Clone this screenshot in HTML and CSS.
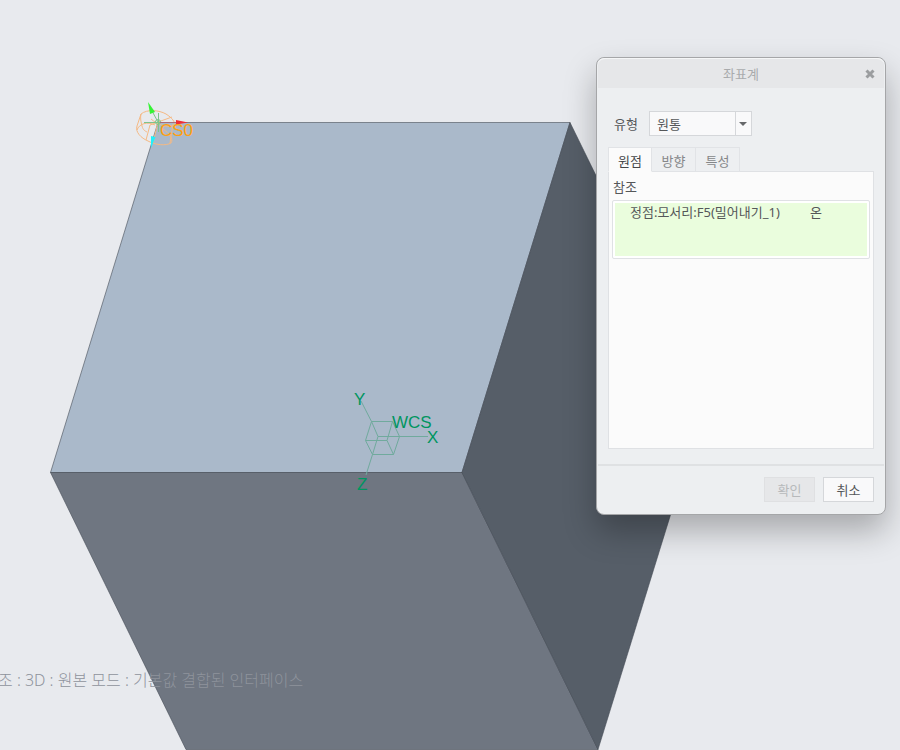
FILE: index.html
```html
<!DOCTYPE html>
<html lang="ko">
<head>
<meta charset="utf-8">
<title>좌표계</title>
<link rel="stylesheet" href="styles.css">
</head>
<body>
<main class="viewport">
  <svg class="scene" viewBox="0 0 900 750" preserveAspectRatio="xMinYMin slice">
    <g class="solid">
      <path class="face-top" d="M158 122.5H570L462 472.5H50.500Z"/>
      <path class="face-front" d="M50.500 472.500H462L598 749.500H186Z"/>
      <path class="face-side" d="M570 122.500L706 400L598 749.500L462 472.500Z"/>
    </g>
    <g class="wcs">
      <path d="M371.500 421.500H392.500L399.500 436.500L393.500 454.500H372.500L365.500 440.500ZM371.500 421.500L378 436.500L372.500 454.500M378 436.500H428M365.500 440.500H387L393.500 454.500M387 440.500L392.500 421.500M371.500 421.500L361 401M372.500 454.500L366 475"/>
      <text x="354" y="405">Y</text>
      <text x="392" y="428">WCS</text>
      <text x="427" y="443">X</text>
      <text x="357" y="490">Z</text>
    </g>
    <g class="csys">
      <path class="csys-body" d="M141 114C147 109 159 110 166 114C174 119 177 125 172 126C166 127 158 125 151 119M141 114L137 126C135 132 141 138 148 141C155 145 166 146 171 143C174 139 169 133 163 129M141 114C140 118 141 122 142 126M137 130C139 124 147 121 155 125M142 126C143 130 145 131 147 132M158 122L150 125L146 140M158 122L172 117M173 124L170 143M158 122L153 143"/>
      <path class="csys-origin" d="M158.500 113V132M144 122.500H168M158 122L152 111"/>
      <circle class="csys-origin" cx="158" cy="122" r="2.500"/>
      <path class="axis-line" d="M160 122.500H180"/>
      <path class="axis-x" d="M176 120L188 122.500L176 124.500Z"/>
      <path class="axis-y" d="M148 102L155 112L150 114Z"/>
      <path class="axis-z" d="M151 136L155.500 137L151 148Z"/>
      <text x="160" y="136">CS0</text>
    </g>
  </svg>
  <p class="status">조 : 3D : 원본 모드 : 기본값 결합된 인터페이스</p>

  <section class="dialog" role="dialog" aria-labelledby="dialog-title">
    <header class="titlebar">
      <h1 id="dialog-title">좌표계</h1>
      <button class="close" type="button" aria-label="닫기">
        <svg viewBox="0 0 12 12"><path d="M2.500 2.500L9.500 9.500M9.500 2.500L2.500 9.500"/></svg>
      </button>
    </header>
    <div class="body">
      <div class="type-row">
        <label for="type">유형</label>
        <div class="combo">
          <select id="type"><option>원통</option></select>
          <span class="arrow"></span>
        </div>
      </div>
      <div class="tabs" role="tablist">
        <button class="tab active" type="button" role="tab" aria-selected="true">원점</button>
        <button class="tab" type="button" role="tab" aria-selected="false">방향</button>
        <button class="tab" type="button" role="tab" aria-selected="false">특성</button>
      </div>
      <div class="panel" role="tabpanel">
        <h2 id="refs">참조</h2>
        <div class="collector">
          <table aria-labelledby="refs">
            <tbody><tr><td class="ref-name">정점:모서리:F5(밀어내기_1)</td><td>온</td></tr></tbody>
          </table>
        </div>
      </div>
    </div>
    <footer class="actions">
      <button type="button" disabled>확인</button>
      <button type="button">취소</button>
    </footer>
  </section>
</main>
</body>
</html>
```
FILE: styles.css
```css
* { box-sizing: border-box; }

body {
  margin: 0;
  background: #e8eaee;
  color: #555759;
  font: 13px/18px "Noto Sans", "Noto Sans CJK KR", sans-serif;
}

button, select { font: inherit; color: inherit; }
h1, h2, p { margin: 0; font: inherit; }

.viewport {
  position: relative;
  min-height: 100vh;
  overflow: hidden;
}

/* Model */
.scene { position: absolute; inset: 0; width: 100%; height: 100%; }
.solid path { stroke: #454c55; stroke-width: 0.6px; stroke-linejoin: round; }
.solid .face-top { fill: #aab9ca; }
.solid .face-front { fill: #6f7681; }
.solid .face-side { fill: #565e68; }
.scene text { font-family: "Liberation Sans", Arial, sans-serif; font-size: 17px; }
.wcs path { fill: none; stroke: #70aa9d; stroke-width: 1px; }
.wcs text { fill: #009560; }
.csys text { fill: #ffa010; }
.csys-body { fill: none; stroke: #f5b984; stroke-width: 1px; }
.csys-origin { fill: none; stroke: #7dc48b; stroke-width: 1px; }
.axis-line { stroke: #a86c78; }
.axis-x { fill: #f02d37; }
.axis-y { fill: #35f335; }
.axis-z { fill: #22effa; }

.status {
  position: absolute;
  left: 0;
  bottom: 59px;
  color: #8e939c;
  font-size: 16px;
  font-weight: 300;
  line-height: 22px;
  white-space: nowrap;
  text-indent: -2px;
}

/* Floating dialog */
.dialog {
  position: absolute;
  top: 57px;
  right: 14px;
  width: 290px;
  border: 1px solid #a5a6a8;
  border-radius: 8px;
  background: #edeff1;
  box-shadow: 0 16px 32px rgb(0 0 0 / 28%);
}

.titlebar {
  display: grid;
  grid-template-columns: 28px 1fr 28px;
  align-items: center;
  height: 30px;
  margin: 0 1px;
  border-top: 1px solid #f5f6f7;
  border-radius: 7px 7px 0 0;
  background: #e6e7e9;
}
.titlebar h1 { grid-column: 2; color: #a9abad; text-align: center; }
.close { display: flex; justify-content: center; padding: 4px; border: 0; background: none; }
.close svg { width: 12px; height: 12px; }
.close path { stroke: #9b9d9f; stroke-width: 3px; }

.body { padding: 23px 11px 16px; }
.type-row { display: flex; align-items: center; gap: 11px; padding-left: 6px; }
.combo { position: relative; width: 103px; height: 25px; }
.combo select {
  width: 100%;
  height: 100%;
  padding: 0 7px;
  border: 1px solid #d5d7da;
  border-radius: 0;
  background: #f9f9fa;
  appearance: none;
}
.arrow {
  position: absolute;
  inset: 1px 1px 1px auto;
  width: 16px;
  border-left: 1px solid #d5d7da;
  pointer-events: none;
}
.arrow::after {
  content: "";
  position: absolute;
  top: 10px;
  left: 3px;
  border: 4px solid transparent;
  border-top-color: #66686a;
  border-bottom: 0;
}

.tabs { display: flex; margin-top: 11px; }
.tab {
  width: 44px;
  height: 25px;
  margin-bottom: -1px;
  padding: 2px 0 0;
  border: solid #e1e3e6;
  border-width: 1px 1px 1px 0;
  background: #edeff1;
  color: #858789;
}
.tab.active {
  position: relative;
  border-left-width: 1px;
  border-bottom-color: #fbfbfb;
  background: #fbfbfb;
  color: #444648;
}

.panel {
  min-height: 278px;
  padding: 6px 4px;
  border: 1px solid #dfe1e4;
  background: #fbfbfb;
}
.collector {
  min-height: 59px;
  margin: 4px -1px 0;
  padding: 2px;
  border: 1px solid #dfe1e4;
  border-radius: 2px;
  background: #fff;
}
.collector table {
  display: block;
  min-height: 53px;
  border-spacing: 0;
  background: #eafddd;
}
.collector td { padding: 0; }
.collector .ref-name { width: 195px; padding-left: 15px; }

.actions {
  display: flex;
  justify-content: flex-end;
  gap: 8px;
  margin: -1px 1px 0;
  padding: 11px 10px 12px;
  border-top: 2px solid #dfe1e3;
}
.actions button {
  width: 51px;
  height: 25px;
  padding: 0;
  border: 1px solid #d5d7da;
  background: #f9f9fa;
}
.actions button:disabled { border-color: #dfe0e2; background: #e6e7e9; color: #b7b9bb; }
```
